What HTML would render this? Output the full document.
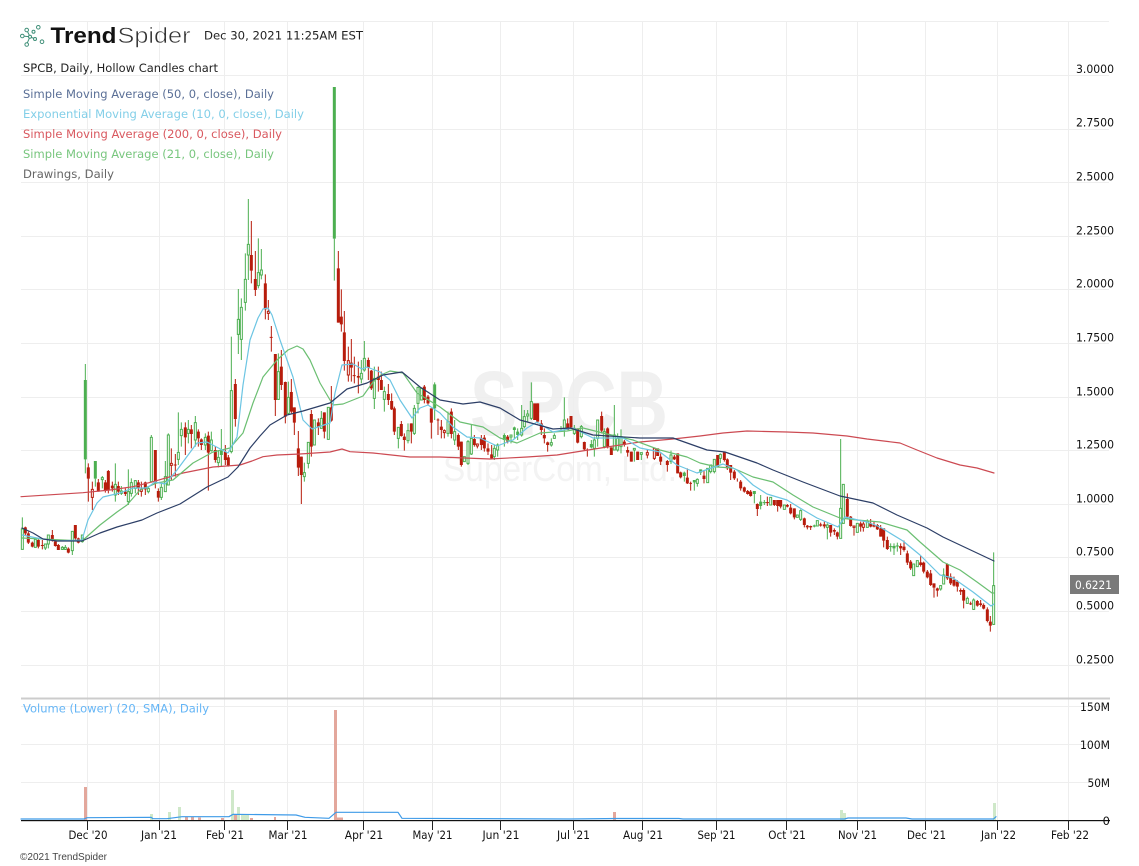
<!DOCTYPE html>
<html lang="en">
<head>
<meta charset="utf-8">
<title>SPCB TrendSpider chart</title>
<style>
html,body{margin:0;padding:0;background:#fff;width:1139px;height:866px;overflow:hidden}
svg{display:block;filter:blur(.3px)}
text{font-family:"DejaVu Sans","Liberation Sans",sans-serif;font-size:11.5px}
.gr{stroke:#eeeeee;stroke-width:1;fill:none}
.gw{stroke:#4caf50;stroke-width:3;fill:none}
.gs{stroke:#4caf50;stroke-width:9;fill:none}
.gh{stroke:#4caf50;stroke-width:3;fill:#fff}
.rw{stroke:#b71c0c;stroke-width:3;fill:none}
.rs{stroke:#b71c0c;stroke-width:9;fill:none}
.rh{stroke:#b71c0c;stroke-width:3;fill:#fff}
.ma{fill:none;stroke-width:1.2;stroke-linejoin:round;stroke-linecap:round}
.p{fill:#111}
.m{fill:#111;text-anchor:middle}
.v{fill:#111;text-anchor:end}
.ic circle{fill:#fff;stroke:#3f8f78;stroke-width:1}
</style>
</head>
<body>
<svg width="1139" height="866" viewBox="0 0 1139 866" xmlns="http://www.w3.org/2000/svg">
<rect width="1139" height="866" fill="#fff"/>

<!-- watermark -->
<text x="470" y="435" font-weight="700" textLength="198" lengthAdjust="spacingAndGlyphs" style="font-family:'Liberation Sans',sans-serif;font-size:92px;font-weight:700;fill:#f0f0f0">SPCB</text>
<text x="443" y="481" textLength="234" lengthAdjust="spacingAndGlyphs" style="font-family:'Liberation Sans',sans-serif;font-size:36px;fill:#f3f3f3">SuperCom, Ltd.</text>

<!-- grid -->
<path class="gr" d="M21 21.5H1109M21 75.5H1109M21 129.5H1109M21 182.5H1109M21 236.5H1109M21 289.5H1109M21 343.5H1109M21 397.5H1109M21 450.5H1109M21 504.5H1109M21 557.5H1109M21 611.5H1109M21 665.5H1109M21 706.5H1109M21 744.5H1109M21 782.5H1109"/>
<path class="gr" d="M87.5 21V820M159.5 21V820M224.5 21V820M287.5 21V820M363.5 21V820M432.5 21V820M500.5 21V820M573.5 21V820M642.5 21V820M716.5 21V820M786.5 21V820M857.5 21V820M925.5 21V820M997.5 21V820M1068.5 21V820"/>
<rect x="21" y="697.5" width="1089" height="2" fill="#cccccc"/>

<!-- candles: first segment -->
<g transform="translate(0,470) scale(.33333)">
<path class="gw" d="M67 142V238M136 222V240M145 195V235M187 228V240M196 225V240M217 184V255M247 195V218"/>
<path class="rw" d="M76 170V195M85 185V222M97 215V232M115 208V235M127 210V238M157 180V215M166 212V230M175 222V240M205 232V250M226 165V210M235 203V220"/>
<path class="rs" d="M76 172V190M85 190V218M97 218V230M115 210V230M127 225V228M157 195V212M166 214V228M175 225V240M205 236V248M226 165V205M235 205V218"/>
<path class="gh" d="M64 177h6v61h-6zM103 208h6v24h-6zM133 222h6v12h-6zM142 195h6v27h-6zM184 232h6v6h-6zM193 232h6v6h-6zM214 184h6v58h-6zM244 195h6v20h-6z"/>
</g>

<!-- candles: Dec to Apr -->
<g transform="translate(0,180) scale(.33333)">
<path class="rw" d="M265 850V965M277 905V990M295 897V935M316 900V938M325 870V940M337 905V935M355 905V945M376 925V948M415 900V945M424 905V950M436 905V945M466 810V925M475 925V965M514 805V900M526 822V890M556 727V825M574 735V805M595 748V800M604 775V810M625 755V932M646 798V848M676 795V855M685 825V860M706 597V740M754 123V310M766 213V348M796 283V418M805 360V420M814 438V515M826 522V708M844 510V630M856 605V730M874 597V700M883 682V765M895 753V888M904 830V972M934 690V830M955 715V765M973 697V775M994 618V725M1015 213V428M1024 328V455M1033 393V572M1045 500V605M1054 477V605M1063 530V610M1075 545V640M1105 533V600M1114 570V630M1135 560V635M521 855h9M809 472h9M1058 587h9"/>
<path class="gw" d="M256 552V880M286 896V920M307 888V925M346 850V965M364 918V945M385 868V975M394 895V950M406 900V940M445 920V940M454 765V908M484 910V960M496 843V935M505 760V915M535 697V855M544 727V800M565 720V790M586 708V800M616 760V810M634 755V815M655 810V862M664 747V860M694 470V820M715 327V522M724 355V540M736 220V392M745 57V300M775 175V325M784 207V298M835 520V660M865 605V705M913 848V905M925 787V865M943 720V795M964 693V745M985 682V778M1003 176V302M1084 540V610M1093 483V575M1123 560V687"/>
<path class="gs" d="M256 600V838M286 843V896M664 812V825M1003 -279V176"/>
<path class="rs" d="M265 862V896M295 907V935M316 907V930M325 873V930M337 917V925M355 918V935M376 935V942M415 907V925M436 907V928M466 810V910M475 933V953M556 742V772M574 748V762M595 755V775M604 778V795M625 767V818M646 810V840M676 815V840M685 832V858M706 612V717M754 225V272M766 297V330M796 310V388M826 522V660M844 560V615M856 606V710M874 636V695M883 682V728M895 805V863M904 830V885M934 702V800M955 727V740M973 697V755M994 682V722M1015 265V428M1024 410V433M1033 457V543M1054 548V563M1075 588V593M1105 540V563M1114 572V625M1135 590V600"/>
<path class="rh" d="M274 928h6v24h-6zM421 928h6v6h-6zM511 850h6v6h-6zM802 394h6v6h-6zM1042 542h6v43h-6z"/>
<path class="gh" d="M343 913h6v32h-6zM361 933h6v7h-6zM382 935h6v30h-6zM391 908h6v32h-6zM403 902h6v23h-6zM442 925h6v10h-6zM451 772h6v133h-6zM481 922h6v30h-6zM493 890h6v45h-6zM502 765h6v150h-6zM532 817h6v21h-6zM541 748h6v19h-6zM562 748h6v12h-6zM583 728h6v52h-6zM613 772h6v23h-6zM631 780h6v32h-6zM652 832h6v16h-6zM691 632h6v183h-6zM712 418h6v45h-6zM721 382h6v96h-6zM733 298h6v69h-6zM742 193h6v32h-6zM772 278h6v39h-6zM781 270h6v15h-6zM832 575h6v83h-6zM862 652h6v48h-6zM910 878h6v12h-6zM922 787h6v63h-6zM940 720h6v75h-6zM961 715h6v30h-6zM982 682h6v96h-6zM1081 580h6v17h-6zM1090 535h6v35h-6zM1120 595h6v60h-6zM304 893h6v6h-6z"/>
</g>

<!-- candles: Apr to Sep -->
<g transform="translate(340,340) scale(.33333)">
<path class="rw" d="M124 95V150M145 132V195M155 160V210M163 200V285M184 243V290M193 280V332M214 250V310M253 135V190M264 165V195M274 205V296M294 235V285M304 240V295M313 268V295M334 205V295M355 280V330M364 305V380M403 285V320M412 310V325M424 285V330M433 285V335M444 310V345M455 315V358M503 285V310M593 190V250M604 240V285M613 265V310M623 305V335M683 235V270M693 228V265M713 265V310M733 305V330M742 325V350M785 215V280M803 262V325M814 322V345M853 300V320M863 320V350M874 335V365M893 335V360M922 330V355M943 325V360M953 325V348M962 340V375M982 360V395M1003 345V360M1013 340V400M1022 395V415M1042 385V432M1052 425V452M1092 390V430M1133 345V380M290 240h8M1048 430h8M738 330h8"/>
<path class="gw" d="M133 140V215M175 262V325M204 250V310M223 195V285M234 140V220M244 145V180M284 127V240M324 215V290M344 240V315M384 300V375M394 255V345M463 315V360M473 310V350M493 280V320M513 285V310M523 260V295M533 265V300M545 195V290M553 210V265M563 210V245M574 127V240M634 295V320M643 280V295M663 258V275M673 172V290M703 255V285M724 255V295M754 300V325M763 290V350M773 240V320M793 265V325M823 195V330M833 280V335M843 268V340M883 325V365M904 338V360M993 332V372M1033 395V425M1063 420V452M1072 415V440M1082 388V405M1103 385V428M1112 375V400M1123 358V400"/>
<path class="gs" d="M284 133V205M493 285V300M523 262V270M533 275V285M754 312V322M1033 398V408M1063 420V427M1082 388V398"/>
<path class="rs" d="M124 120V150M145 162V180M155 183V208M163 205V275M184 252V288M193 290V300M214 250V275M253 140V180M264 170V190M274 205V248M304 260V270M334 215V282M355 285V320M364 305V375M403 297V315M424 295V315M433 293V325M444 325V335M455 343V355M503 290V305M584 190V240M593 190V245M604 250V270M613 285V295M623 307V315M683 250V270M693 228V262M713 265V308M733 306V328M785 228V272M803 265V322M814 322V345M853 305V315M863 330V338M874 335V365M893 335V360M953 325V348M962 350V365M982 363V375M1003 350V358M1013 340V400M1022 397V412M1042 413V430M1092 407V417M1133 345V380"/>
<path class="rh" d="M310 272h6v6h-6zM409 312h6v6h-6zM919 338h6v7h-6zM940 325h6v30h-6z"/>
<path class="gh" d="M130 155h6v23h-6zM172 262h6v33h-6zM201 272h6v30h-6zM220 205h6v75h-6zM231 142h6v48h-6zM241 145h6v35h-6zM321 245h6v35h-6zM341 275h6v25h-6zM370 350h6v15h-6zM381 305h6v65h-6zM391 295h6v47h-6zM460 325h6v25h-6zM470 315h6v15h-6zM510 285h6v6h-6zM542 265h6v20h-6zM550 230h6v30h-6zM560 222h6v6h-6zM571 185h6v50h-6zM631 308h6v7h-6zM640 287h6v8h-6zM670 240h6v25h-6zM700 265h6v15h-6zM721 260h6v30h-6zM760 300h6v25h-6zM770 240h6v55h-6zM790 275h6v45h-6zM820 285h6v45h-6zM830 295h6v35h-6zM840 290h6v30h-6zM880 325h6v5h-6zM901 338h6v5h-6zM990 345h6v20h-6zM1069 418h6v12h-6zM1100 385h6v43h-6zM1109 375h6v20h-6zM1120 358h6v37h-6z"/>
</g>

<!-- candles: Sep to Dec -->
<g transform="translate(700,420) scale(.33333)">
<path class="rw" d="M73 95V125M82 115V150M92 135V180M103 150V180M112 175V185M122 180V212M133 200V218M143 210V224M152 210V230M172 250V288M202 230V258M223 240V258M233 240V275M242 240V265M262 252V262M272 252V283M283 265V298M313 293V322M322 315V328M332 317V330M362 308V320M373 305V325M392 315V350M403 325V345M412 335V358M442 220V295M452 288V320M462 318V347M482 305V335M490 305V335M512 297V322M522 305V322M532 312V330M542 315V350M551 325V382M562 350V390M602 370V405M612 362V395M622 392V435M632 420V450M662 407V440M671 425V460M682 450V475M692 450V498M702 490V533M712 503V530M742 430V480M752 460V495M762 470V500M772 480V515M782 505V525M791 505V565M812 545V555M832 540V560M842 540V560M851 550V568M862 562V607M871 588V635M197 248h10"/>
<path class="gw" d="M61 100V130M163 213V250M182 225V268M193 240V255M253 255V268M292 285V292M302 268V303M343 314V322M352 302V318M382 310V358M422 57V355M430 193V310M472 310V337M502 298V322M572 370V395M582 370V405M592 368V395M641 432V467M652 422V440M722 495V512M731 445V492M802 530V552M821 535V570M881 397V615M188 248h10M567 380h10M587 378h10"/>
<path class="gs" d="M163 213V222M182 245V258M343 316V320M582 378V385"/>
<path class="rs" d="M73 97V120M82 118V145M92 135V158M103 155V175M122 185V205M133 202V215M143 213V222M152 215V228M172 252V267M223 240V255M233 240V258M242 240V260M262 255V260M272 263V280M283 265V292M313 295V315M322 317V322M332 318V322M362 313V317M373 313V319M392 315V338M403 330V335M412 337V350M442 237V290M452 290V318M482 310V320M512 310V320M522 315V320M532 315V328M542 325V350M551 325V362M562 360V387M602 378V385M612 380V390M622 400V428M632 425V445M662 427V435M671 428V455M682 455V472M692 460V495M702 490V503M712 505V512M742 432V475M752 470V490M762 480V497M772 485V500M782 510V515M791 510V542M812 550V553M832 543V557M842 550V555M851 555V566M862 568V603M871 605V617"/>
<path class="rh" d="M459 318h6v4h-6zM487 312h6v10h-6z"/>
<path class="gh" d="M58 103h6v12h-6zM209 232h6v23h-6zM250 255h6v13h-6zM289 285h6v7h-6zM299 272h6v26h-6zM349 302h6v16h-6zM379 315h6v7h-6zM419 265h6v90h-6zM427 193h6v117h-6zM469 310h6v27h-6zM499 303h6v19h-6zM638 432h6v35h-6zM649 422h6v18h-6zM719 497h6v10h-6zM728 465h6v27h-6zM799 535h6v15h-6zM818 540h6v28h-6zM878 497h6v116h-6z"/>
</g>

<!-- moving averages -->
<path class="ma" stroke="#cc4a52" stroke-width="1.2" d="M21 496.7L83 492.7L110 490L133 486.7L153 481.7L183 473L213 467L240 465L252 461L263 456.7L277 455L300 454L330 452L342 449L350 451.7L373 453L410 457L440 457L490 459L527 457L557 455L607 447L640 442L673 439L700 436L723 433L747 431L787 432L813 433L847 436L867 439L900 443L917 450L937 458L960 465L977 468L994 473"/>
<path class="ma" stroke="#6bbf72" d="M22 538L43 539L82 541L100 525L117 512L127 505L140 490L157 483L173 480L193 463L213 452L230 448L243 433L253 403L263 377L277 360L288 350L297 346L303 349L310 360L320 383L333 405L343 404L363 396L373 382L381 375L390 371L403 373L417 393L440 407L460 422L483 427L500 438L517 443L540 433L567 431L583 428L603 433L633 440L660 450L687 457L700 463L717 467L733 468L753 477L773 482L793 495L813 507L840 518L857 520L880 522L907 530L920 542L943 562L960 570L977 582L992 593L994 593"/>
<path class="ma" stroke="#6cc5e3" d="M22 535L37 538L57 541L82 540L88 520L97 503L103 497L120 493L133 488L147 488L155 482L165 484L177 470L197 443L207 442L228 453L237 437L243 385L250 340L258 318L263 309L268 308L272 315L280 340L293 377L303 420L312 429L330 423L335 393L342 365L353 364L362 369L367 367L380 372L390 380L400 400L412 418L420 408L428 405L440 413L453 427L467 437L480 438L497 446L513 440L527 428L537 422L553 432L573 428L593 438L623 438L640 448L660 452L677 465L697 473L723 464L737 470L753 485L767 494L787 500L800 508L817 518L838 527L845 517L867 522L880 527L903 541L920 555L940 575L953 578L973 592L991 606L994 604"/>
<path class="ma" stroke="#2c3e66" stroke-width="1.3" d="M22 528L33 533L43 539L57 541L82 541L100 533L117 527L142 520L157 513L180 504L207 487L228 477L238 467L250 448L260 436L270 425L287 415L303 411L330 403L347 389L367 383L383 375L402 372L420 387L440 400L463 404L480 402L500 408L520 420L553 429L570 428L593 435L640 438L673 438L707 450L725 452L757 463L773 470L803 482L840 496L873 503L897 515L927 528L943 537L994 561"/>

<!-- volume bars -->
<g fill="#e3a79c">
<rect x="84" y="787" width="3" height="33"/>
<rect x="334" y="710" width="3" height="110"/>
<rect x="337" y="817.5" width="6" height="2.5"/>
<rect x="234" y="814" width="3" height="6"/>
<rect x="274" y="817" width="2" height="3"/>
<rect x="613" y="812" width="3" height="8"/>
<rect x="185" y="817" width="3" height="3"/>
<rect x="191" y="817" width="3" height="3"/>
<rect x="198" y="817.5" width="3" height="2.5"/>
<rect x="221" y="818" width="3" height="2"/>
<rect x="250" y="818" width="3" height="2"/>
</g>
<g fill="#cfe8c9">
<rect x="150" y="814" width="3" height="6"/>
<rect x="168" y="812" width="3" height="8"/>
<rect x="178" y="807" width="3" height="13"/>
<rect x="231" y="790" width="3" height="30"/>
<rect x="237" y="807" width="3" height="13"/>
<rect x="241" y="815" width="8" height="5"/>
<rect x="840" y="810" width="3" height="10"/>
<rect x="843" y="813" width="3" height="7"/>
<rect x="993" y="803" width="3" height="17"/>
</g>

<!-- axis and ticks -->
<rect x="21" y="820" width="1089" height="1.2" fill="#111"/>
<path stroke="#222" stroke-width="1" fill="none" d="M87.5 820V830M159.5 820V830M224.5 820V830M287.5 820V830M363.5 820V830M432.5 820V830M500.5 820V830M573.5 820V830M642.5 820V830M716.5 820V830M786.5 820V830M857.5 820V830M925.5 820V830M997.5 820V830M1068.5 820V830"/>
<path class="ma" stroke="#3f9be8" stroke-width="1.5" d="M21 819L84 819L87 817.7L151 817.3L153 818.7L167 818.7L182 816.7L229 816.7L233 814.3L296 815L305 817.3L329 818.3L336 812.3L398 812.3L402 818.3L570 819L617 818.5L679 818.5L683 819L844.5 819L848 818L906 818L912 819L993.6 819L996 816.7"/>

<!-- logo -->
<g class="ic">
<path d="M26.7 30L30 36.7L26.7 44.3M30 36.7L35 39M30 36.7L22 36" stroke="#3f8f78" stroke-width="1" fill="none"/>
<circle cx="22.3" cy="36" r="1.8"/>
<circle cx="26.7" cy="30" r="1.8"/>
<circle cx="30" cy="36.7" r="1.5"/>
<circle cx="33.5" cy="31.7" r="1.5"/>
<circle cx="38.3" cy="27.3" r="1.8"/>
<circle cx="35" cy="39" r="1.5"/>
<circle cx="42" cy="41.7" r="1.8"/>
<circle cx="26.7" cy="44.5" r="1.8"/>
</g>
<text x="50.5" y="43" textLength="66" lengthAdjust="spacingAndGlyphs" style="font-family:'Liberation Sans',sans-serif;font-size:22px;font-weight:700;fill:#111">Trend</text>
<text x="117.5" y="43" textLength="73" lengthAdjust="spacingAndGlyphs" stroke="#fff" stroke-width=".55" style="font-family:'Liberation Sans',sans-serif;font-size:22px;fill:#333">Spider</text>
<text x="204" y="39.5" textLength="159" lengthAdjust="spacingAndGlyphs" fill="#222">Dec 30, 2021 11:25AM EST</text>

<!-- legend -->
<text x="23" y="72" textLength="195" lengthAdjust="spacingAndGlyphs" fill="#222">SPCB, Daily, Hollow Candles chart</text>
<text x="23" y="98" textLength="251" lengthAdjust="spacingAndGlyphs" fill="#5a6f96">Simple Moving Average (50, 0, close), Daily</text>
<text x="23" y="118" textLength="281" lengthAdjust="spacingAndGlyphs" fill="#83cfe8">Exponential Moving Average (10, 0, close), Daily</text>
<text x="23" y="138" textLength="259" lengthAdjust="spacingAndGlyphs" fill="#d9585f">Simple Moving Average (200, 0, close), Daily</text>
<text x="23" y="158" textLength="251" lengthAdjust="spacingAndGlyphs" fill="#78c67e">Simple Moving Average (21, 0, close), Daily</text>
<text x="23" y="178" textLength="91" lengthAdjust="spacingAndGlyphs" fill="#666">Drawings, Daily</text>
<text x="23" y="712.5" textLength="186" lengthAdjust="spacingAndGlyphs" fill="#64b5f6">Volume (Lower) (20, SMA), Daily</text>

<!-- price labels -->
<text class="p" x="1076" y="73" textLength="38" lengthAdjust="spacingAndGlyphs">3.0000</text>
<text class="p" x="1076" y="126.5" textLength="38" lengthAdjust="spacingAndGlyphs">2.7500</text>
<text class="p" x="1076" y="180.5" textLength="38" lengthAdjust="spacingAndGlyphs">2.5000</text>
<text class="p" x="1076" y="234.5" textLength="38" lengthAdjust="spacingAndGlyphs">2.2500</text>
<text class="p" x="1076" y="287.5" textLength="38" lengthAdjust="spacingAndGlyphs">2.0000</text>
<text class="p" x="1076" y="341.5" textLength="38" lengthAdjust="spacingAndGlyphs">1.7500</text>
<text class="p" x="1076" y="395.5" textLength="38" lengthAdjust="spacingAndGlyphs">1.5000</text>
<text class="p" x="1076" y="448.5" textLength="38" lengthAdjust="spacingAndGlyphs">1.2500</text>
<text class="p" x="1076" y="502.5" textLength="38" lengthAdjust="spacingAndGlyphs">1.0000</text>
<text class="p" x="1076" y="555.5" textLength="38" lengthAdjust="spacingAndGlyphs">0.7500</text>
<text class="p" x="1076" y="609.5" textLength="38" lengthAdjust="spacingAndGlyphs">0.5000</text>
<text class="p" x="1076" y="663.5" textLength="38" lengthAdjust="spacingAndGlyphs">0.2500</text>
<rect x="1070" y="575" width="49" height="19" fill="#7a7a7a"/>
<text x="1075" y="589" textLength="37" lengthAdjust="spacingAndGlyphs" fill="#fff">0.6221</text>

<!-- volume labels -->
<text class="v" x="1110" y="711" textLength="30" lengthAdjust="spacingAndGlyphs">150M</text>
<text class="v" x="1110" y="749" textLength="30" lengthAdjust="spacingAndGlyphs">100M</text>
<text class="v" x="1110" y="787" textLength="22.5" lengthAdjust="spacingAndGlyphs">50M</text>
<text class="v" x="1110" y="825">0</text>

<!-- month labels -->
<text class="m" x="88" y="839" textLength="39" lengthAdjust="spacingAndGlyphs">Dec '20</text>
<text class="m" x="159" y="839" textLength="36" lengthAdjust="spacingAndGlyphs">Jan '21</text>
<text class="m" x="225" y="839" textLength="38" lengthAdjust="spacingAndGlyphs">Feb '21</text>
<text class="m" x="288" y="839" textLength="39" lengthAdjust="spacingAndGlyphs">Mar '21</text>
<text class="m" x="364" y="839" textLength="38.5" lengthAdjust="spacingAndGlyphs">Apr '21</text>
<text class="m" x="432.5" y="839" textLength="40" lengthAdjust="spacingAndGlyphs">May '21</text>
<text class="m" x="501" y="839" textLength="37" lengthAdjust="spacingAndGlyphs">Jun '21</text>
<text class="m" x="573.5" y="839" textLength="33" lengthAdjust="spacingAndGlyphs">Jul '21</text>
<text class="m" x="643" y="839" textLength="40" lengthAdjust="spacingAndGlyphs">Aug '21</text>
<text class="m" x="716.5" y="839" textLength="38" lengthAdjust="spacingAndGlyphs">Sep '21</text>
<text class="m" x="787" y="839" textLength="37.5" lengthAdjust="spacingAndGlyphs">Oct '21</text>
<text class="m" x="857.5" y="839" textLength="39" lengthAdjust="spacingAndGlyphs">Nov '21</text>
<text class="m" x="926.5" y="839" textLength="39" lengthAdjust="spacingAndGlyphs">Dec '21</text>
<text class="m" x="998.5" y="839" textLength="35" lengthAdjust="spacingAndGlyphs">Jan '22</text>
<text class="m" x="1070" y="839" textLength="38" lengthAdjust="spacingAndGlyphs">Feb '22</text>

<text x="20" y="860" textLength="87" lengthAdjust="spacingAndGlyphs" style="font-family:'Liberation Sans',sans-serif;font-size:10.5px;fill:#444">©2021 TrendSpider</text>
</svg>
</body>
</html>
